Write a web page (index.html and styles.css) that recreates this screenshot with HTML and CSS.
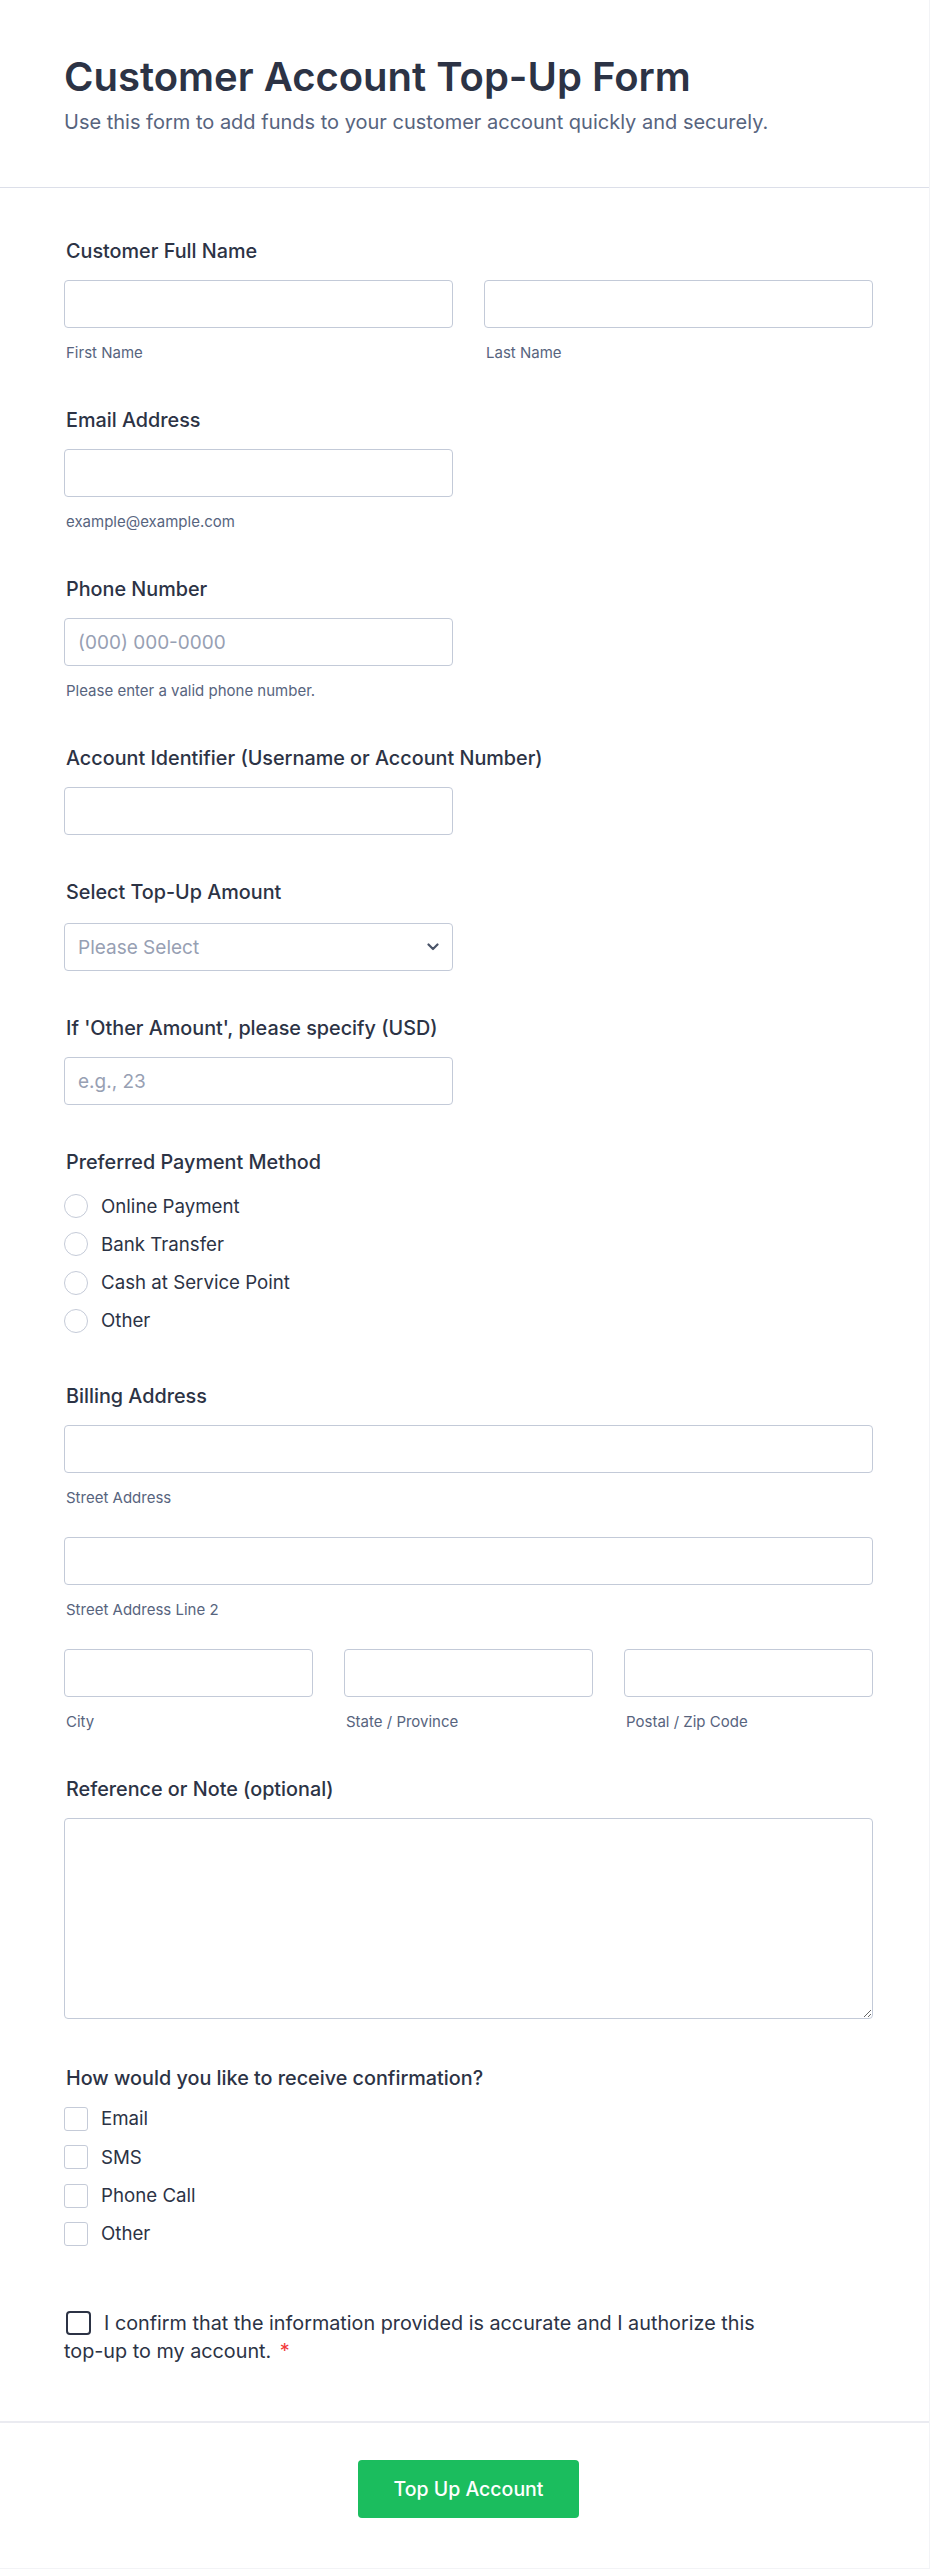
FILE: index.html
```html
<!DOCTYPE html>
<html lang="en">
<head>
<meta charset="utf-8">
<title>Customer Account Top-Up Form</title>
<link rel="stylesheet" href="styles.css">
</head>
<body>
<div class="card">
  <header class="form-header">
    <h1 class="title">Customer Account Top-Up Form</h1>
    <p class="subtitle">Use this form to add funds to your customer account quickly and securely.</p>
  </header>

  <form class="form-body">
    <div class="field">
      <div class="field-label">Customer Full Name</div>
      <div class="cols">
        <div class="col">
          <input class="input" type="text">
          <div class="sublabel">First Name</div>
        </div>
        <div class="col">
          <input class="input" type="text">
          <div class="sublabel">Last Name</div>
        </div>
      </div>
    </div>

    <div class="field">
      <div class="field-label">Email Address</div>
      <input class="input half" type="email">
      <div class="sublabel">example@example.com</div>
    </div>

    <div class="field">
      <div class="field-label">Phone Number</div>
      <input class="input half" type="text" placeholder="(000) 000-0000">
      <div class="sublabel">Please enter a valid phone number.</div>
    </div>

    <div class="field">
      <div class="field-label">Account Identifier (Username or Account Number)</div>
      <input class="input half" type="text">
    </div>

    <div class="field">
      <div class="field-label label-select">Select Top-Up Amount</div>
      <div class="select half">
        <span class="select-text">Please Select</span>
        <svg class="chevron" width="12" height="8" viewBox="0 0 12 8" aria-hidden="true"><path d="M1.5 1.5 L6 6 L10.5 1.5" fill="none" stroke="#4a5468" stroke-width="2.2" stroke-linecap="round" stroke-linejoin="round"/></svg>
      </div>
    </div>

    <div class="field">
      <div class="field-label">If 'Other Amount', please specify (USD)</div>
      <input class="input half" type="text" placeholder="e.g., 23">
    </div>

    <div class="field field-radios">
      <div class="field-label">Preferred Payment Method</div>
      <div class="options">
        <label class="option"><span class="radio"></span><span>Online Payment</span></label>
        <label class="option"><span class="radio"></span><span>Bank Transfer</span></label>
        <label class="option"><span class="radio"></span><span>Cash at Service Point</span></label>
        <label class="option"><span class="radio"></span><span>Other</span></label>
      </div>
    </div>

    <div class="field">
      <div class="field-label">Billing Address</div>
      <input class="input" type="text">
      <div class="sublabel">Street Address</div>
      <input class="input addr-next" type="text">
      <div class="sublabel">Street Address Line 2</div>
      <div class="cols addr-next">
        <div class="col">
          <input class="input" type="text">
          <div class="sublabel">City</div>
        </div>
        <div class="col">
          <input class="input" type="text">
          <div class="sublabel">State / Province</div>
        </div>
        <div class="col">
          <input class="input" type="text">
          <div class="sublabel">Postal / Zip Code</div>
        </div>
      </div>
    </div>

    <div class="field field-note">
      <div class="field-label">Reference or Note (optional)</div>
      <textarea class="textarea"></textarea>
    </div>

    <div class="field field-checks">
      <div class="field-label">How would you like to receive confirmation?</div>
      <div class="options">
        <label class="option"><span class="check"></span><span>Email</span></label>
        <label class="option"><span class="check"></span><span>SMS</span></label>
        <label class="option"><span class="check"></span><span>Phone Call</span></label>
        <label class="option"><span class="check"></span><span>Other</span></label>
      </div>
    </div>

    <div class="consent"><span class="consent-box"></span><span class="consent-text">I confirm that the information provided is accurate and I authorize this</span> <span class="consent-text">top-up to my account.</span> <span class="req">*</span></div>
  </form>

  <footer class="form-footer">
    <button class="submit" type="button">Top Up Account</button>
  </footer>
</div>
</body>
</html>
```

FILE: styles.css
```css
* { box-sizing: border-box; }

html, body {
  margin: 0;
  padding: 0;
  background: #ffffff;
}

body {
  font-family: "Inter", "Noto Sans", "Liberation Sans", sans-serif;
  color: #2c3345;
}

.card {
  width: 930px;
  min-height: 2569px;
  background: #ffffff;
  border-right: 1px solid #f2f3f6;
  border-bottom: 1px solid #f2f3f6;
}

/* ---------- header ---------- */
.form-header {
  padding: 53px 56px 51px 64px;
  border-bottom: 1px solid #dcdfe9;
}

.title {
  margin: 0;
  font-size: 40px;
  line-height: 48px;
  font-weight: 600;
  color: #2c3345;
}

.subtitle {
  margin: 7px 0 0;
  font-size: 20px;
  line-height: 28px;
  color: #57647e;
}

/* ---------- body ---------- */
.form-body {
  padding: 50px 56px 0 64px;
}

.field {
  margin-bottom: 44px;
}

.field-label {
  padding-left: 2px;
  font-size: 19.8px;
  line-height: 26px;
  font-weight: 500;
  color: #2c3345;
  margin-bottom: 16px;
}

.label-select {
  margin-bottom: 18px;
}

.input {
  display: block;
  width: 100%;
  height: 48px;
  border: 1px solid #c3cad8;
  border-radius: 4px;
  background: #fff;
  padding: 0 13px;
  font-family: inherit;
  font-size: 19px;
  color: #2c3345;
  outline: none;
}

.input::placeholder {
  color: #97a0b3;
}

.half {
  width: calc((100% - 31px) / 2);
}

.sublabel {
  margin-top: 15px;
  padding-left: 2px;
  font-size: 15px;
  line-height: 20px;
  color: #57647e;
}

.cols {
  display: flex;
  gap: 31px;
}

.col {
  flex: 1 1 0;
  min-width: 0;
}

.addr-next {
  margin-top: 29px;
}

/* ---------- select ---------- */
.select {
  height: 48px;
  border: 1px solid #c3cad8;
  border-radius: 4px;
  display: flex;
  align-items: center;
  justify-content: space-between;
  padding: 0 13px 0 13px;
}

.select-text {
  font-size: 19px;
  color: #97a0b3;
}

/* ---------- radios / checks ---------- */
.options {
  display: flex;
  flex-direction: column;
  gap: 14.33px;
}

.field-radios .field-label {
  margin-bottom: 19px;
}

.field-radios .options {
  padding-bottom: 6px;
}

.option {
  display: flex;
  align-items: center;
  gap: 13px;
  height: 24px;
  font-size: 18.7px;
  color: #2c3345;
}

.radio {
  flex: none;
  width: 24px;
  height: 24px;
  border: 1px solid #c5cbd8;
  border-radius: 50%;
}

.check {
  flex: none;
  width: 24px;
  height: 24px;
  border: 1px solid #c5cbd8;
  border-radius: 3px;
}

/* ---------- textarea ---------- */
.textarea {
  display: block;
  width: 100%;
  height: 201px;
  border: 1px solid #c3cad8;
  border-radius: 4px;
  resize: vertical;
  font-family: inherit;
  outline: none;
}

.field-note {
  margin-bottom: 46px;
}

.field-checks {
  margin-bottom: 63px;
}

/* ---------- consent ---------- */
.consent {
  width: 710px;
  font-size: 19.8px;
  line-height: 28px;
  color: #2c3345;
  margin-bottom: 56px;
}

.consent-box {
  display: inline-block;
  width: 25px;
  height: 24px;
  border: 2px solid #2c3345;
  border-radius: 4px;
  vertical-align: -5px;
  margin: 0 13px 0 2px;
}

.req {
  color: #f23a3c;
  margin-left: 3px;
}

/* ---------- footer ---------- */
.form-footer {
  border-top: 2px solid #eaebf1;
  padding: 37px 56px 50px 64px;
  display: flex;
  justify-content: center;
}

.submit {
  width: 221px;
  height: 58px;
  border: none;
  border-radius: 4px;
  background: #1bbd5e;
  color: #ffffff;
  font-family: inherit;
  font-size: 19.5px;
  font-weight: 500;
}
```
